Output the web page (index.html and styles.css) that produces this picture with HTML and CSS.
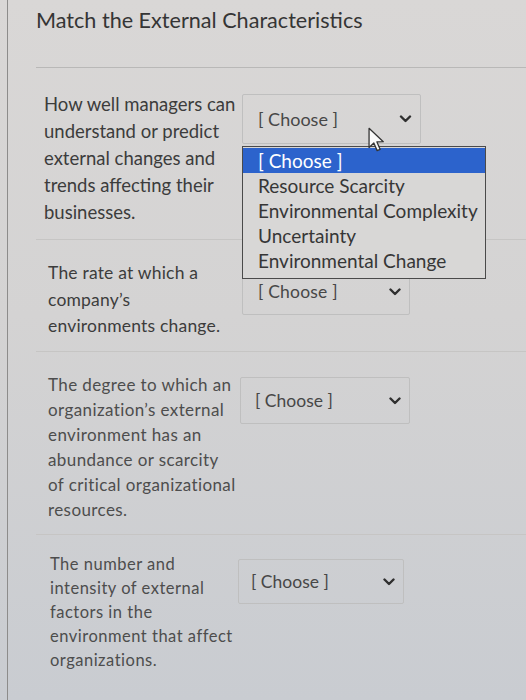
FILE: index.html
```html
<!DOCTYPE html>
<html lang="en">
<head>
<meta charset="utf-8">
<title>Match the External Characteristics</title>
<link rel="stylesheet" href="styles.css">
</head>
<body>
<div class="frame">
  <h1 class="title">Match the External Characteristics</h1>

  <div class="row r1">
    <div class="prompt">How well managers can understand or predict external changes and trends affecting their businesses.</div>
    <div class="answer">
      <div class="select">
        <span class="val">[ Choose ]</span>
        <svg class="chev" viewBox="0 0 12 8" width="13" height="8"><path d="M1.5 1.5 L6 6 L10.5 1.5" fill="none" stroke="#2f2f2f" stroke-width="2.4" stroke-linecap="round" stroke-linejoin="round"/></svg>
      </div>
      <ul class="menu">
        <li class="opt on">[ Choose ]</li>
        <li class="opt">Resource Scarcity</li>
        <li class="opt">Environmental Complexity</li>
        <li class="opt">Uncertainty</li>
        <li class="opt">Environmental Change</li>
      </ul>
      <svg class="cursor" viewBox="0 0 16 24" width="17" height="26"><path d="M1 1 L1 19 L5.5 14.8 L8.6 22 L11.4 20.8 L8.4 13.8 L14.4 13.6 Z" fill="#fafafa" stroke="#333" stroke-width="1.2" stroke-linejoin="round"/></svg>
    </div>
  </div>

  <div class="row r2">
    <div class="prompt">The rate at which a company’s environments change.</div>
    <div class="answer">
      <div class="select">
        <span class="val">[ Choose ]</span>
        <svg class="chev" viewBox="0 0 12 8" width="12" height="8"><path d="M1.5 1.5 L6 6 L10.5 1.5" fill="none" stroke="#2f2f2f" stroke-width="2.4" stroke-linecap="round" stroke-linejoin="round"/></svg>
      </div>
    </div>
  </div>

  <div class="row r3">
    <div class="prompt">The degree to which an organization’s external environment has an abundance or scarcity of critical organizational resources.</div>
    <div class="answer">
      <div class="select">
        <span class="val">[ Choose ]</span>
        <svg class="chev" viewBox="0 0 12 8" width="12" height="8"><path d="M1.5 1.5 L6 6 L10.5 1.5" fill="none" stroke="#2f2f2f" stroke-width="2.4" stroke-linecap="round" stroke-linejoin="round"/></svg>
      </div>
    </div>
  </div>

  <div class="row r4">
    <div class="prompt">The number and intensity of external factors in the environment that affect organizations.</div>
    <div class="answer">
      <div class="select">
        <span class="val">[ Choose ]</span>
        <svg class="chev" viewBox="0 0 12 8" width="12" height="8"><path d="M1.5 1.5 L6 6 L10.5 1.5" fill="none" stroke="#2f2f2f" stroke-width="2.4" stroke-linecap="round" stroke-linejoin="round"/></svg>
      </div>
    </div>
  </div>
</div>
</body>
</html>
```

FILE: styles.css
```css
html, body {
  margin: 0;
  padding: 0;
}
body {
  width: 526px;
  height: 700px;
  overflow: hidden;
  background: linear-gradient(180deg, #d9d7d6 0%, #d4d3d3 45%, #c9ccd1 100%);
  font-family: Lato, "Open Sans", "Liberation Sans", sans-serif;
  color: #3a3a3a;
}
.frame {
  margin-left: 7px;
  height: 700px;
  border-left: 1px solid #8d8c8b;
  padding-left: 28px;
}
.title {
  margin: 0;
  padding-top: 6px;
  height: 68px;
  box-sizing: border-box;
  font-size: 21.6px;
  font-weight: 400;
  color: #353535;
  border-bottom: 1px solid #b9b8b7;
  line-height: 28px;
}
.row {
  display: grid;
  border-bottom: 1px solid #c6c5c4;
  box-sizing: border-box;
}
.prompt {
  color: #3c3c3c;
}
.answer {
  position: relative;
}
.select {
  box-sizing: border-box;
  display: flex;
  align-items: center;
  justify-content: space-between;
  border: 1px solid #bfbfbf;
  border-radius: 2px;
  padding: 0 8px 0 15px;
  color: #474747;
}
.val {
  line-height: 1;
}
.menu {
  position: absolute;
  left: 0;
  top: 55px;
  width: 244px;
  margin: 0;
  padding: 1px 0 5px;
  list-style: none;
  box-sizing: border-box;
  border: 1.5px solid #4a4a4a;
  background: #d8d7d6;
  z-index: 2;
  font-size: 19px;
  color: #363636;
}
.opt {
  height: 25px;
  line-height: 25px;
  padding-left: 15px;
  white-space: nowrap;
}
.opt.on {
  background: #2c63cc;
  color: #ffffff;
}
.cursor {
  position: absolute;
  left: 126px;
  top: 36px;
  z-index: 3;
}

/* row 1 */
.r1 {
  height: 172px;
  padding-top: 23px;
  padding-left: 8px;
  grid-template-columns: 198px auto;
  font-size: 18.5px;
  line-height: 27px;
}
.r1 .select {
  margin-top: 3px;
  width: 179px;
  height: 50px;
  font-size: 18px;
}
/* row 2 */
.r2 {
  height: 112px;
  padding-top: 20px;
  padding-left: 12px;
  grid-template-columns: 194px auto;
  font-size: 17.5px;
  line-height: 26.5px;
  letter-spacing: 0.2px;
}
.r2 .select {
  margin-top: 8px;
  width: 168px;
  height: 47px;
  font-size: 17.5px;
}
/* row 3 */
.r3 {
  height: 183px;
  padding-top: 20px;
  padding-left: 12px;
  grid-template-columns: 188px auto;
  font-size: 17px;
  line-height: 25px;
  letter-spacing: 0.4px;
}
.r3 .prompt, .r4 .prompt {
  color: #4d4d4d;
}
.r3 .select {
  margin-top: 5px;
  margin-left: 4px;
  width: 170px;
  height: 47px;
  font-size: 17.5px;
  padding-left: 14px;
  letter-spacing: 0;
}
/* row 4 */
.r4 {
  padding-top: 17px;
  padding-left: 14px;
  grid-template-columns: 186px auto;
  font-size: 16.5px;
  line-height: 24px;
  letter-spacing: 0.5px;
  border-bottom: none;
}
.r4 .select {
  margin-top: 7px;
  margin-left: 2px;
  width: 166px;
  height: 45px;
  font-size: 17.5px;
  padding-left: 12px;
  letter-spacing: 0;
}
```
